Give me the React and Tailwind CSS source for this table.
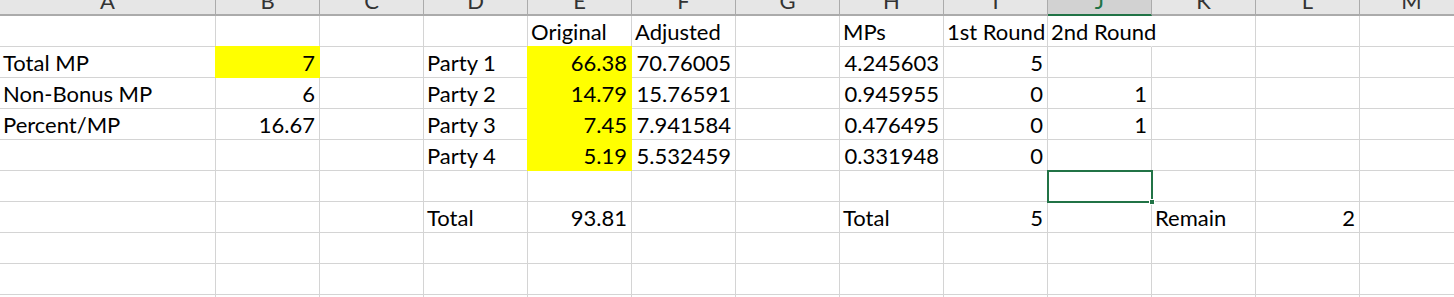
import React from 'react';

const COLS = ['A', 'B', 'C', 'D', 'E', 'F', 'G', 'H', 'I', 'J', 'K', 'L', 'M'];

// each row: map of column letter -> [text, align, fill, spills over]
const ROWS = [
  { E: ['Original', 'l'], F: ['Adjusted', 'l'], H: ['MPs', 'l'], I: ['1st Round', 'l'], J: ['2nd Round', 'l', null, true] },
  { A: ['Total MP', 'l'], B: ['7', 'r', 'y'], D: ['Party 1', 'l'], E: ['66.38', 'r', 'y'], F: ['70.76005', 'r'], H: ['4.245603', 'r'], I: ['5', 'r'] },
  { A: ['Non-Bonus MP', 'l'], B: ['6', 'r'], D: ['Party 2', 'l'], E: ['14.79', 'r', 'y'], F: ['15.76591', 'r'], H: ['0.945955', 'r'], I: ['0', 'r'], J: ['1', 'r'] },
  { A: ['Percent/MP', 'l'], B: ['16.67', 'r'], D: ['Party 3', 'l'], E: ['7.45', 'r', 'y'], F: ['7.941584', 'r'], H: ['0.476495', 'r'], I: ['0', 'r'], J: ['1', 'r'] },
  { D: ['Party 4', 'l'], E: ['5.19', 'r', 'y'], F: ['5.532459', 'r'], H: ['0.331948', 'r'], I: ['0', 'r'] },
  {},
  { D: ['Total', 'l'], E: ['93.81', 'r'], H: ['Total', 'l'], I: ['5', 'r'], K: ['Remain', 'l'], L: ['2', 'r'] },
  {},
  {},
  {},
];

const Cell = ({ data, selected }) => {
  const [text, align, fill, spill] = data || [];
  const yellow = fill === 'y';
  return (
    <div
      className={
        'relative flex items-end h-[31px] border-b whitespace-nowrap ' +
        (yellow ? 'bg-[#ffff00] border-[#ffff00] -ml-px -mt-px h-[32px] ' : 'border-[#d4d4d4] ') +
        (spill ? 'border-r border-r-transparent overflow-visible z-10 ' : 'border-r ') +
        (align === 'r' ? 'justify-end pr-[4px] ' : 'pl-[3px] ') +
        (selected ? 'outline-2 outline-[#217346] -outline-offset-1 z-10 ' : '')
      }
    >
      {text && <span className="leading-[20px] pb-[4px]">{text}</span>}
      {selected && <div className="absolute right-[-4px] bottom-[-4px] w-[6px] h-[6px] bg-[#217346] border border-white" />}
    </div>
  );
};

export default function App() {
  return (
    <div
      className="w-[1454px] h-[297px] overflow-hidden bg-white text-black text-[22px]"
      style={{ fontFamily: 'Lato, "Liberation Sans", sans-serif' }}
    >
      <div className="grid grid-cols-[216px_repeat(12,104px)] w-max">
        {COLS.map((c) => (
          <div
            key={c}
            className={
              'h-[16px] overflow-hidden flex justify-center border-r border-r-[#ababab] border-b-2 ' +
              (c === 'J' ? 'bg-[#d2d2d2] border-b-[#217346] text-[#217346]' : 'bg-[#e6e6e6] border-b-[#ababab] text-[#333333]')
            }
          >
            <span className="leading-[20px] -mt-[9px]">{c}</span>
          </div>
        ))}
        {ROWS.map((row, ri) =>
          COLS.map((c) => (
            <Cell key={ri + c} data={row[c]} selected={ri === 5 && c === 'J'} />
          ))
        )}
      </div>
    </div>
  );
}
